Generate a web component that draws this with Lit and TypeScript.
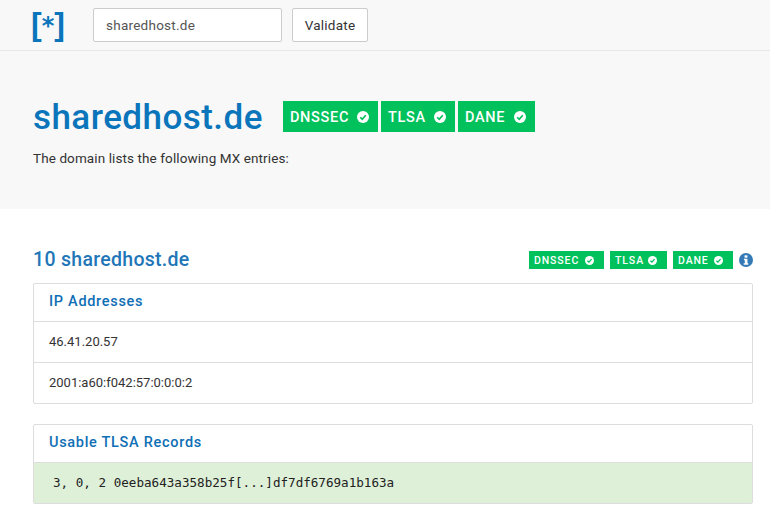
import { LitElement, html, css } from "lit";
import { customElement } from "lit/decorators.js";

const check = html`<svg class="chk" viewBox="0 0 24 24" aria-hidden="true"><circle cx="12" cy="12" r="12" fill="#fff"></circle><path d="M6.5 12.5l4 4 7-8" fill="none" stroke="#00c15b" stroke-width="3.4"></path></svg>`;

@customElement("app-root")
export class AppRoot extends LitElement {
  static styles = css`
    :host { display: block; height: 521px; overflow: hidden; background: #fff; font-family: Roboto, "Liberation Sans", sans-serif; color: #2b2b2b; font-size: 14px; }
    * { box-sizing: border-box; }
    .top { height: 51px; background: #f8f8f8; border-bottom: 1px solid #e7e7e7; display: flex; align-items: flex-start; padding: 8px 0 0 31px; }
    .logo { width: 62px; height: 34px; color: #0a75bb; font-family: "Liberation Sans", sans-serif; }
    .mark { width: 34px; height: 34px; display: flex; justify-content: space-between; align-items: flex-start; }
    .br { font-size: 32px; line-height: 33px; font-weight: 700; }
    .ast { font-family: "DejaVu Sans", sans-serif; font-weight: 700; font-size: 24px; line-height: 30px; margin-top: 3px; }
    .input { width: 189px; height: 34px; border: 1px solid #ccc; border-radius: 2px; background: #fff; padding: 0 12px; line-height: 32px; color: #555; letter-spacing: .25px; font-size: 13.5px; }
    .btn { width: 76px; height: 34px; margin-left: 10px; border: 1px solid #ccc; border-radius: 2px; background: #fff; line-height: 32px; text-align: center; color: #333; letter-spacing: .25px; font-size: 13.5px; }
    .hero { height: 158px; background: #f8f8f8; padding: 50px 33px 0; }
    .hero-row { display: flex; align-items: flex-start; height: 31px; }
    h1 { margin: 0 20px 0 0; font-size: 35px; line-height: 33px; font-weight: 500; color: #0a75bb; letter-spacing: .45px; }
    .badges { display: flex; gap: 3px; }
    .badge { height: 31px; background: #00c15b; color: #fff; display: flex; align-items: center; justify-content: space-between; padding: 1px 9px 0 7px; font-size: 14.5px; font-weight: 500; letter-spacing: .7px; }
    .chk { display: block; width: 12px; height: 12px; }
    .hero p { margin: 18px 0 0; font-size: 13.5px; line-height: 16px; letter-spacing: .1px; color: #333; }
    .content { padding: 40px 17px 0 33px; }
    .sec { display: flex; justify-content: space-between; align-items: center; height: 22px; margin-bottom: 12px; }
    h2 { margin: 0; font-size: 19.5px; line-height: 22px; font-weight: 500; color: #2276b8; letter-spacing: .3px; }
    .small { display: flex; align-items: center; gap: 6px; }
    .sb { height: 18px; background: #00c15b; color: #fff; display: flex; align-items: center; justify-content: space-between; padding: 0 10px 0 5px; font-size: 10.5px; font-weight: 500; letter-spacing: .9px; }
    .sb .chk { width: 9px; height: 9px; }
    .info { display: block; width: 14px; height: 14px; }
    .panel { border: 1px solid #ddd; border-radius: 2px; margin-bottom: 20px; background: #fff; }
    .head { height: 38px; padding: 0 15px; line-height: 36px; font-size: 14.5px; font-weight: 500; color: #0f6fb5; letter-spacing: .7px; border-bottom: 1px solid #ddd; }
    .row { height: 41px; padding: 0 15px; line-height: 39px; font-size: 13px; color: #333; border-bottom: 1px solid #ddd; }
    .row:last-child { border-bottom: 0; height: 40px; }
    .ok { background: #dff0d8; font-family: "DejaVu Sans Mono", monospace; font-size: 12.6px; padding-left: 19px; color: #222; }
    .d { width: 75px; } .t { width: 57px; } .n { width: 60px; }
    .bd { width: 95px; } .bt { width: 74px; } .bn { width: 77px; }
  `;

  render() {
    return html`
      <div class="top">
        <div class="logo"><div class="mark"><span class="br">[</span><span class="ast">*</span><span class="br">]</span></div></div>
        <div class="input">sharedhost.de</div>
        <div class="btn">Validate</div>
      </div>
      <div class="hero">
        <div class="hero-row">
          <h1>sharedhost.de</h1>
          <div class="badges">
            <span class="badge bd">DNSSEC ${check}</span>
            <span class="badge bt">TLSA ${check}</span>
            <span class="badge bn">DANE ${check}</span>
          </div>
        </div>
        <p>The domain lists the following MX entries:</p>
      </div>
      <div class="content">
        <div class="sec">
          <h2>10 sharedhost.de</h2>
          <div class="small">
            <span class="sb d">DNSSEC ${check}</span>
            <span class="sb t">TLSA ${check}</span>
            <span class="sb n">DANE ${check}</span>
            <svg class="info" viewBox="0 0 24 24" aria-hidden="true"><circle cx="12" cy="12" r="12" fill="#337ab7"></circle><rect x="9.5" y="4" width="5" height="4" fill="#fff"></rect><path d="M8.5 10h6v7.500h1.500V20h-8v-2.500h2v-5h-1.500z" fill="#fff"></path></svg>
          </div>
        </div>
        <div class="panel">
          <div class="head">IP Addresses</div>
          <div class="row">46.41.20.57</div>
          <div class="row">2001:a60:f042:57:0:0:0:2</div>
        </div>
        <div class="panel">
          <div class="head">Usable TLSA Records</div>
          <div class="row ok">3, 0, 2 0eeba643a358b25f[...]df7df6769a1b163a</div>
        </div>
      </div>
    `;
  }
}
